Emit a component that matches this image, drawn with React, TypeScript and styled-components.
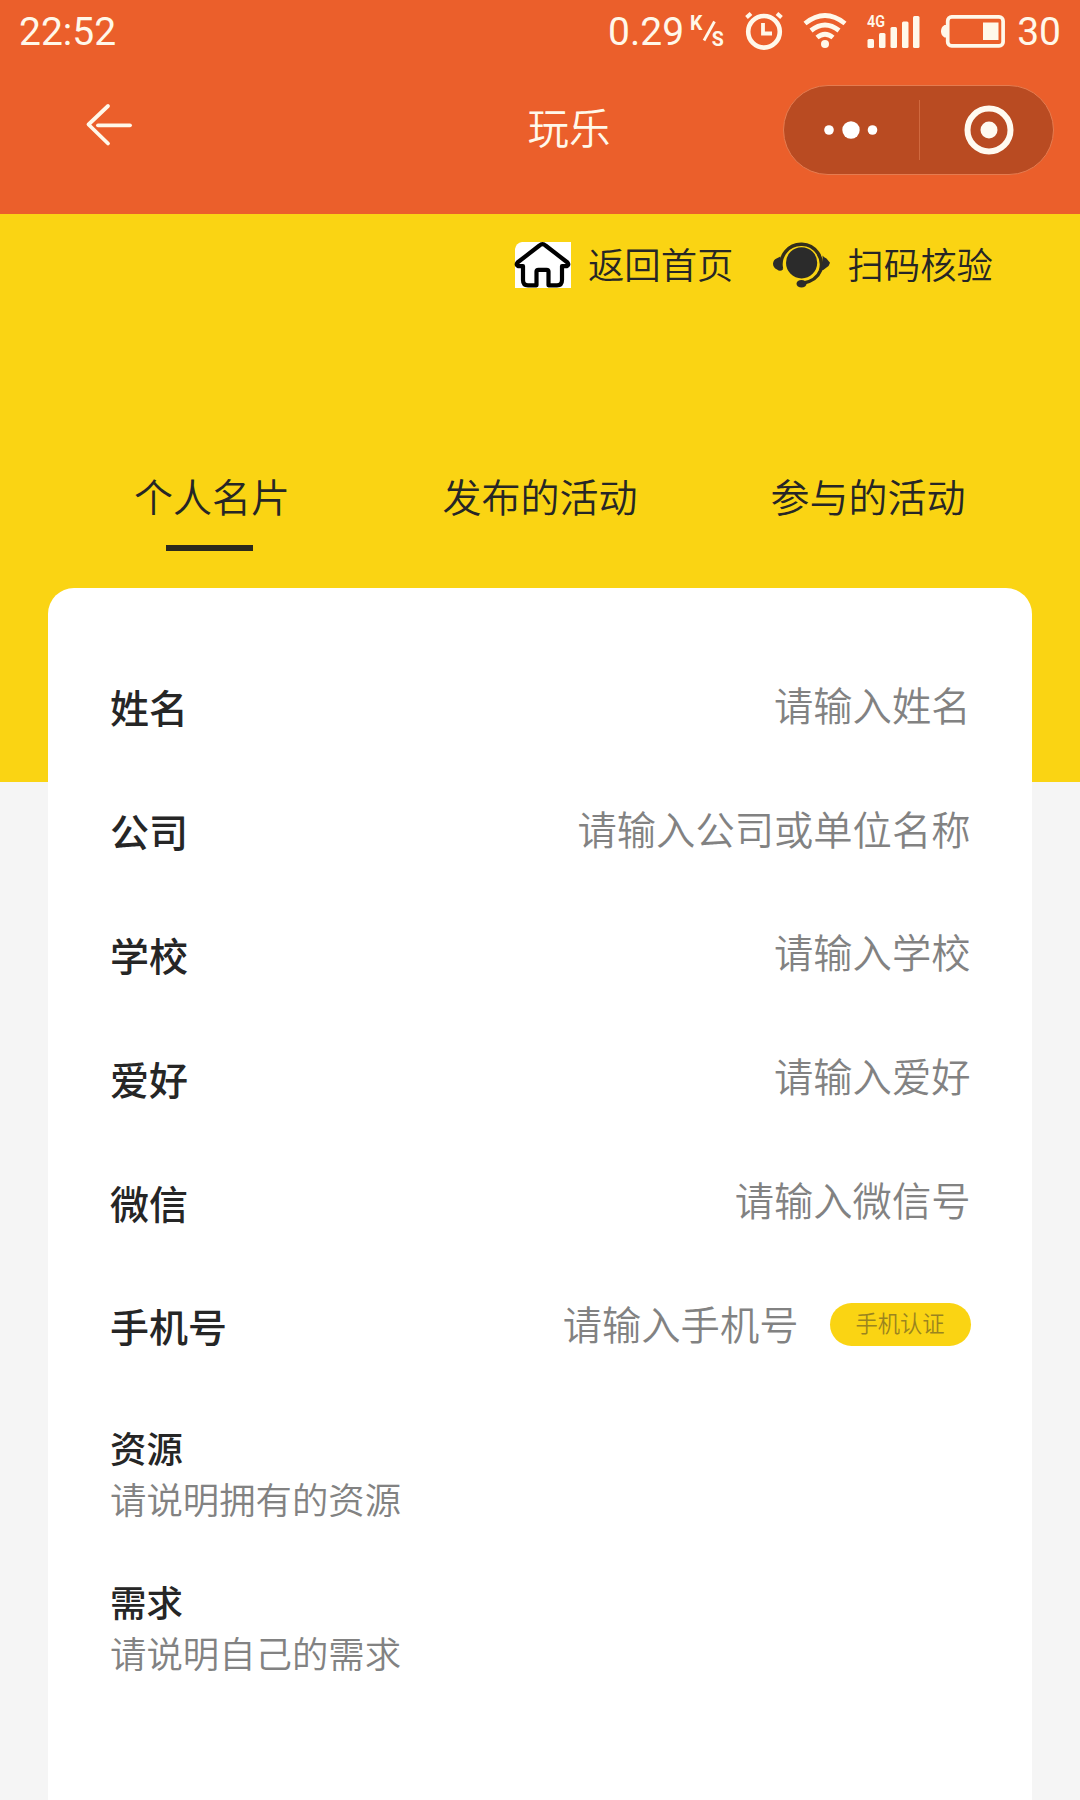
import React from 'react';
import styled, { createGlobalStyle } from 'styled-components';

const GlobalStyle = createGlobalStyle`
  * { box-sizing: border-box; }
  body {
    margin: 0;
    background: #f5f5f5;
    font-family: "Noto Sans CJK SC", sans-serif;
    color: #262626;
  }
`;

const Page = styled.div`
  width: 1080px;
  height: 1800px;
  overflow: hidden;
  background: #f5f5f5;
`;

const Header = styled.header`
  height: 214px;
  background: #eb5f2b;
  color: #fff8ea;
`;

const StatusBar = styled.div`
  display: flex;
  align-items: center;
  justify-content: space-between;
  height: 62px;
  padding: 0 19px 0 19px;
  font-family: Roboto, sans-serif;
`;

const StatusText = styled.span`
  font-size: 39px;
  line-height: 60px;
  padding-top: 2px;
  font-weight: 400;
  white-space: nowrap;
`;

const StatusGroup = styled.div`
  display: flex;
  align-items: center;
`;

const BatteryLevel = styled(StatusText)`
  margin-left: 12px;
`;

const Glyph = styled.svg<{ $left?: number }>`
  display: block;
  flex: none;
  overflow: visible;
  margin-left: ${(p) => p.$left ?? 0}px;
`;

const NavBar = styled.div`
  display: grid;
  grid-template-columns: 354px 1fr 354px;
  align-items: center;
  height: 136px;
  padding: 0 26px 0 83px;
`;

const BackButton = styled.button`
  display: flex;
  align-items: center;
  width: 52px;
  height: 56px;
  padding: 0 0 10px;
  border: 0;
  background: none;
  color: inherit;
`;

const Title = styled.h1`
  margin: 0;
  padding: 0 0 9px 1px;
  font-size: 41.5px;
  line-height: 60px;
  font-weight: 350;
  text-align: center;
`;

const Capsule = styled.div`
  display: flex;
  align-items: center;
  justify-self: end;
  width: 271px;
  height: 90px;
  border: 1.5px solid #e57c50;
  border-radius: 45px;
  background: #b94b22;
`;

const CapsuleButton = styled.button<{ $main?: boolean }>`
  display: flex;
  align-items: center;
  justify-content: center;
  width: ${(p) => (p.$main ? 136 : 132)}px;
  height: 60px;
  padding: ${(p) => (p.$main ? '0 2px 0 0' : '0 0 0 6px')};
  border: 0;
  border-right: ${(p) => (p.$main ? '1.5px solid #d0693f' : '0')};
  background: none;
`;

const Hero = styled.section`
  height: 568px;
  background: #fad413;
`;

const QuickLinks = styled.div`
  display: flex;
  justify-content: flex-end;
  gap: 40px;
  height: 102px;
  padding-right: 87px;
`;

const QuickLink = styled.a`
  display: flex;
  align-items: center;
  gap: 17px;
  height: 102px;
  font-size: 36.4px;
  font-weight: 350;
`;

const QuickLinkText = styled.span`
  line-height: 54px;
  padding-bottom: 4px;
`;

const Tabs = styled.nav`
  display: grid;
  grid-template-columns: repeat(3, 1fr);
  margin: 150px 48px 0;
`;

const Tab = styled.div<{ $active?: boolean }>`
  display: flex;
  flex-direction: column;
  align-items: center;
  gap: 20px;
  font-size: 39px;
  line-height: 59px;
  font-weight: 350;

  &::after {
    content: '';
    width: 87px;
    height: 6px;
    margin-right: 5px;
    background: ${(p) => (p.$active ? '#2b2a1c' : 'transparent')};
  }
`;

const Card = styled.main`
  display: flow-root;
  height: 1300px;
  margin: -194px 48px 0;
  padding: 54px 61.5px 0 62px;
  border-radius: 26px 26px 0 0;
  background: #fff;
`;

const Row = styled.label`
  display: flex;
  align-items: center;
  justify-content: space-between;
  height: 123.8px;
`;

const Label = styled.span<{ $small?: boolean }>`
  padding-top: ${(p) => (p.$small ? 0 : 5)}px;
  font-size: ${(p) => (p.$small ? 36.4 : 39)}px;
  line-height: 52px;
  font-weight: 500;
`;

const Value = styled.span`
  display: flex;
  align-items: center;
  gap: 31px;
`;

const Placeholder = styled.span<{ $small?: boolean }>`
  font-size: ${(p) => (p.$small ? 36.4 : 39.3)}px;
  line-height: ${(p) => (p.$small ? 51 : 52)}px;
  font-weight: 350;
  color: #828282;
`;

const VerifyButton = styled.button`
  width: 141px;
  height: 43px;
  margin-top: 3px;
  padding: 0;
  border: 0;
  border-radius: 22px;
  background: #fad413;
  font-family: inherit;
  font-size: 22.3px;
  line-height: 37px;
  padding-bottom: 3px;
  font-weight: 350;
  color: #9a841f;
`;

const Block = styled.label`
  display: flex;
  flex-direction: column;
  height: 154.5px;
  padding-top: 36px;
`;

const fields = [
  { label: '姓名', hint: '请输入姓名' },
  { label: '公司', hint: '请输入公司或单位名称' },
  { label: '学校', hint: '请输入学校' },
  { label: '爱好', hint: '请输入爱好' },
  { label: '微信', hint: '请输入微信号' },
  { label: '手机号', hint: '请输入手机号', action: '手机认证' },
];

const blocks = [
  { label: '资源', hint: '请说明拥有的资源' },
  { label: '需求', hint: '请说明自己的需求' },
];

const SpeedUnit = () => (
  <Glyph $left={6} width="37" height="36" viewBox="0 0 37 36" fill="currentColor">
    <text x="0" y="17" fontSize="19.5" fontWeight="700">K</text>
    <path d="M24.500 8.500 14 27.500" stroke="currentColor" strokeWidth="2.800" />
    <text x="21.800" y="32.500" fontSize="19.5" fontWeight="700">S</text>
  </Glyph>
);

const Alarm = () => (
  <Glyph $left={18} width="38" height="38" viewBox="0 0 38 38" fill="none" stroke="currentColor">
    <circle cx="19" cy="19.8" r="15.8" strokeWidth="4.600" />
    <path d="M18 11v10.5H27" strokeWidth="3.8" />
    <path d="M1.5 5.5 6 1.500M36.5 5.5 32 1.500" strokeWidth="4" />
  </Glyph>
);

const Wifi = () => (
  <Glyph $left={20} width="44" height="38" viewBox="0 0 44 38" fill="none" stroke="currentColor" strokeWidth="4.8">
    <path d="M2 11.5Q22-4.500 42 11.500" />
    <path d="M8 18.5Q22 7.500 36 18.500" />
    <path d="M14 25.500Q22 19 30 25.500" />
    <circle cx="22" cy="32" r="4" fill="currentColor" stroke="none" />
  </Glyph>
);

const Signal = () => (
  <Glyph $left={20} width="54" height="36" viewBox="0 0 54 36" fill="currentColor">
    <text x="0" y="13.500" fontSize="16" fontWeight="600" textLength="18" lengthAdjust="spacingAndGlyphs">4G</text>
    <rect x="0.500" y="26" width="6.500" height="9" rx="1.500" />
    <rect x="12" y="20" width="6.500" height="15" rx="1.500" />
    <rect x="23.500" y="14" width="6.500" height="21" rx="1.500" />
    <rect x="35" y="8.500" width="6.500" height="26.500" rx="1.500" />
    <rect x="46" y="3" width="6.500" height="32" rx="1.500" />
  </Glyph>
);

const Battery = () => (
  <Glyph $left={20} width="64" height="33" viewBox="0 0 64 33" fill="currentColor">
    <rect x="6.700" y="1.900" width="55.400" height="29" rx="4" fill="none" stroke="currentColor" strokeWidth="3.700" />
    <path d="M6 10H3.500Q0 12 0 16.200T3.500 22.500H6z" />
    <rect x="42" y="7.500" width="15.500" height="17.500" />
  </Glyph>
);

const Back = () => (
  <Glyph width="52" height="46" viewBox="0 0 52 46" fill="none" stroke="currentColor" strokeWidth="3.800" strokeLinecap="round" strokeLinejoin="round">
    <path d="M25 4 5.500 22.500 25 41.500" />
    <path d="M15 23.300H47" />
  </Glyph>
);

const More = () => (
  <Glyph width="56" height="20" viewBox="0 0 56 20" fill="currentColor" color="#fff">
    <circle cx="6" cy="10" r="4.800" />
    <circle cx="28" cy="10" r="8.700" />
    <circle cx="49.500" cy="10" r="4.800" />
  </Glyph>
);

const Target = () => (
  <Glyph width="50" height="50" viewBox="0 0 50 50" fill="none" color="#fffaf0">
    <circle cx="25" cy="25" r="21.500" stroke="currentColor" strokeWidth="6" />
    <circle cx="25" cy="25" r="8.500" fill="currentColor" />
  </Glyph>
);

const Home = () => (
  <Glyph width="57" height="46" viewBox="0 0 57 46">
    <path d="M8 0H57V46H1V7Q2 1 8 0z" fill="#fff" />
    <path
      d="M28.500 2.200Q27 2.200 25.500 3.500L3.500 20.500Q1.500 23 4.500 24.200H9V38Q9 43.300 14 43.300H22.500V29.500Q22.500 27.800 24.500 27.800H32.500Q34.500 27.800 34.500 29.500V43.300H43Q48 43.300 48 38V24.200H52.500Q55.500 23 53.500 20.500L31.500 3.500Q30 2.200 28.500 2.200z"
      fill="#fff" stroke="#000" strokeWidth="4.200" strokeLinejoin="round"
    />
  </Glyph>
);

const Headset = () => (
  <Glyph width="57" height="46" viewBox="0 0 57 46" fill="#2b2b2b">
    <circle cx="28.600" cy="20.800" r="15.600" />
    <path d="M8.500 27A20.200 20.200 0 1 1 47.500 28.500Q43.500 39 29 41.500" fill="none" stroke="#332e1c" strokeWidth="3.500" />
    <path d="M7.500 14.500Q7 22 10 27.500Q7 30 4 27.500Q0 25.500 0 21.500Q.500 17.500 3.500 16.500z" />
    <path d="M49.500 13.500Q51 15.500 53.500 16.500L57 20.700Q56 24.500 53.500 25.500Q50 29 47 28Q50.500 21 49.500 13.500z" />
    <ellipse cx="28.500" cy="41.800" rx="5" ry="3.800" />
  </Glyph>
);

export default function App() {
  return (
    <Page>
      <GlobalStyle />
      <Header>
        <StatusBar>
          <StatusText>22:52</StatusText>
          <StatusGroup>
            <StatusText>0.29</StatusText>
            <SpeedUnit />
            <Alarm />
            <Wifi />
            <Signal />
            <Battery />
            <BatteryLevel>30</BatteryLevel>
          </StatusGroup>
        </StatusBar>
        <NavBar>
          <BackButton aria-label="返回"><Back /></BackButton>
          <Title>玩乐</Title>
          <Capsule>
            <CapsuleButton $main aria-label="更多"><More /></CapsuleButton>
            <CapsuleButton aria-label="关闭"><Target /></CapsuleButton>
          </Capsule>
        </NavBar>
      </Header>
      <Hero>
        <QuickLinks>
          <QuickLink><Home /><QuickLinkText>返回首页</QuickLinkText></QuickLink>
          <QuickLink><Headset /><QuickLinkText>扫码核验</QuickLinkText></QuickLink>
        </QuickLinks>
        <Tabs>
          <Tab $active>个人名片</Tab>
          <Tab>发布的活动</Tab>
          <Tab>参与的活动</Tab>
        </Tabs>
      </Hero>
      <Card>
        {fields.map((f) => (
          <Row key={f.label}>
            <Label>{f.label}</Label>
            <Value>
              <Placeholder>{f.hint}</Placeholder>
              {f.action && <VerifyButton>{f.action}</VerifyButton>}
            </Value>
          </Row>
        ))}
        {blocks.map((b) => (
          <Block key={b.label}>
            <Label $small>{b.label}</Label>
            <Placeholder $small>{b.hint}</Placeholder>
          </Block>
        ))}
      </Card>
    </Page>
  );
}
